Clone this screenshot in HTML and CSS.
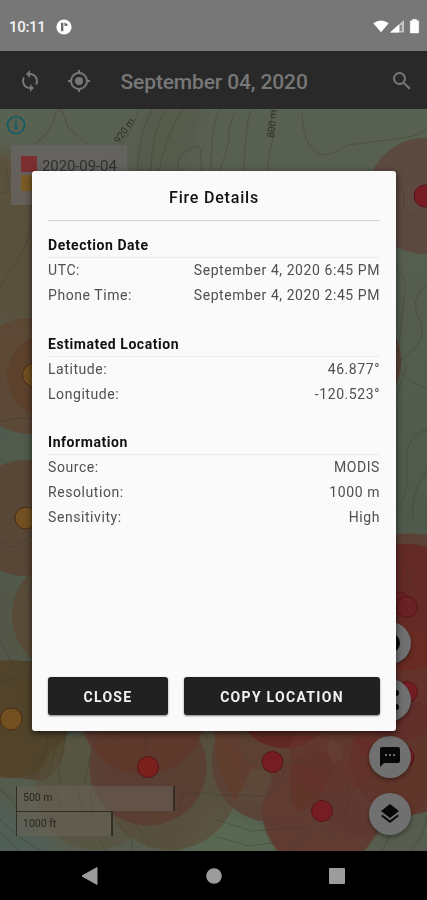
FILE: index.html
```html
<!DOCTYPE html>
<html lang="en">
<head>
<meta charset="utf-8">
<meta name="viewport" content="width=device-width, initial-scale=1">
<title>Fire Details</title>
<link rel="stylesheet" href="styles.css">
</head>
<body>
<div class="phone">
  <header class="status">
    <span class="clock">10:11</span>
    <svg class="notice" viewBox="0 0 16 16"><circle cx="8" cy="8" r="7.6" fill="#fff"/><path d="M6.2 3.8v8.4" stroke="#666" stroke-width="2.3"/><path d="M8.2 4.3h1.2M9 4v3" stroke="#777" stroke-width="1.2"/><circle cx="10.3" cy="5.7" r="1.3" fill="#666"/></svg>
    <svg class="signals" viewBox="0 0 48 16"><path d="M.3 4.2Q8-1.3 15.700 4.200L8 13.200z" fill="#fff"/><path d="M17 13.600 31 1v12.600z" fill="#c4c4c4"/><path d="M17 13.600 26 5.500v8.100z" fill="#fff"/><path d="M28 6v6" stroke="#777" stroke-width="1.500"/><path d="M39.500.300h4v1.500h2.200v12.200h-8.400V1.800h2.200z" fill="#fff" stroke="#fff" stroke-width=".5" stroke-linejoin="round"/></svg>
  </header>
  <nav class="appbar">
    <svg class="bar-icon sync" viewBox="0 0 24 24"><path d="M12 4V1L8 5l4 4V6c3.310 0 6 2.690 6 6 0 1.010-.25 1.970-.7 2.800l1.460 1.460C19.540 15.030 20 13.570 20 12c0-4.420-3.580-8-8-8zm0 14c-3.310 0-6-2.690-6-6 0-1.010.25-1.970.7-2.800L5.240 7.740C4.460 8.970 4 10.430 4 12c0 4.420 3.580 8 8 8v3l4-4-4-4v3z"/></svg>
    <svg class="bar-icon locate" viewBox="0 0 24 24"><path d="M12 8a4 4 0 1 0 0 8 4 4 0 0 0 0-8zm8.940 3A8.994 8.994 0 0 0 13 3.060V1h-2v2.060A8.994 8.994 0 0 0 3.060 11H1v2h2.060A8.994 8.994 0 0 0 11 20.940V23h2v-2.060A8.994 8.994 0 0 0 20.940 13H23v-2h-2.060zM12 19a7 7 0 1 1 0-14 7 7 0 0 1 0 14z"/></svg>
    <h1 class="title">September 04, 2020</h1>
    <svg class="bar-icon search" viewBox="0 0 24 24"><path d="M15.500 14h-.79l-.28-.27A6.471 6.471 0 0 0 16 9.500 6.500 6.500 0 1 0 9.500 16c1.610 0 3.090-.59 4.230-1.570l.27.28v.79l5 4.990L20.490 19l-4.990-5zm-6 0a4.500 4.500 0 1 1 0-9 4.500 4.500 0 0 1 0 9z"/></svg>
  </nav>

  <main class="map">
    <svg class="terrain" viewBox="0 109 427 742">
      <defs>
        <linearGradient id="ground" x1="0" y1="0" x2="0" y2="1">
          <stop offset="0" stop-color="#596151"/><stop offset=".55" stop-color="#505a4b"/><stop offset="1" stop-color="#565d4e"/>
        </linearGradient>
        <filter id="soft"><feGaussianBlur stdDeviation="6"/></filter>
        <filter id="edge"><feGaussianBlur stdDeviation=".7"/></filter>
      </defs>
      <rect y="109" width="427" height="742" fill="url(#ground)"/>
      <g filter="url(#soft)">
        <path d="M-10 150Q30 150 50 200V325H-10z" fill="#5a513e"/>
        <path d="M-10 385L50 395V425L-10 440z" fill="#4d5a4d"/>
        <path d="M-10 568L15 590 35 660H-10z" fill="#535747"/>
        <path d="M-10 795Q25 820 65 860H-10z" fill="#505e57"/>
        <path d="M205 800L270 830 280 860H180z" fill="#586853"/>
        <path d="M145 109h60l-25 70h-50z" fill="#545c4c"/>
      </g>
      <g fill="#5b4530" filter="url(#edge)">
        <circle cx="30" cy="376" r="58" fill="#5d4632" opacity=".85"/>
        <circle cx="48" cy="376" r="41" fill="#5e412b" opacity=".8"/>
        <circle cx="25" cy="518" r="58" fill="#5a4433" opacity=".9"/>
        <circle cx="70" cy="615" r="58" opacity=".75"/>
        <circle cx="10" cy="719" r="59" fill="#554229" opacity=".9"/>
        <path d="M0 661H32V731H65Q68 769 42 781L0 775z" fill="#53422b" opacity=".8"/>
        <circle cx="95" cy="791" r="59" fill="#5a4f3c" opacity=".55"/>
        <circle cx="170" cy="782" r="68" fill="#594e3b" opacity=".75"/>
      </g>
      <g filter="url(#edge)">
        <circle cx="425" cy="196" r="58" fill="#5c4a3f"/>
        <circle cx="343" cy="361" r="58" fill="#5c4239"/>
        <path d="M390 535Q414 531 435 537V797Q412 820 382 829L356 858H282Q260 825 264 801 229 777 214 731H390z" fill="#5a4035"/>
        <circle cx="407" cy="607" r="63" fill="#652823" opacity=".88"/>
        <circle cx="401" cy="685" r="55" fill="#682924" opacity=".65"/>
        <circle cx="407" cy="758" r="57" fill="#622f29" opacity=".7"/>
        <circle cx="143" cy="713" r="62" fill="#602f27" opacity=".6"/>
        <circle cx="148" cy="767" r="58.500" fill="#5d362d" opacity=".7"/>
        <circle cx="272" cy="762" r="60" fill="#5d3e32" opacity=".8"/>
        <circle cx="284" cy="699" r="49" fill="#632720" opacity=".8"/>
        <circle cx="321" cy="811" r="59" fill="#5f382f" opacity=".7"/>
        <circle cx="334" cy="751" r="44" fill="#682f29" opacity=".5"/>
        <path d="M331 738l10 8 2 12-10 6-7-14z" fill="#674338" opacity=".5"/>
        <path d="M354 738q22 1 20 20l-12-2z" fill="#682d27" opacity=".4"/>
        <path d="M290 765l43 7-13 25-21 16-8-12z" fill="#65302a" opacity=".55"/>
        <path d="M333 771l33 30 4 37q-33-2-56-33z" fill="#603b31" opacity=".6"/>
        <path d="M214 731h27q-7 25 16 38l-21 32q-20-20-22-70z" fill="#623e2b" opacity=".65"/>
        <path d="M251 768l20 4 1 10-9 21-27-2z" fill="#5d4a3c" opacity=".7"/>
      </g>
      <g class="contours">
        <path d="M61 109Q53 113 54 120L45 136 26 151M61 109Q66 119 68 127L87 144M139 109Q132 131 119 149M152 109Q139 134 137 171M166 109Q151 134 151 171M183 109Q164 139 159 171M220 109Q211 122 211 171M235 113Q227 127 229 142L220 171M251 109Q245 127 244 171M274 109Q269 124 273 137 269 151 267 171M302 113Q303 144 316 152 324 160 348 145L396 139Q421 137 427 127"/>
        <path d="M179 171q-5-13 8-21 14-8 14 3v18M110 171v-7q3-12 13-13l7 8M0 193q11 1 9-9l-3-18M32 226Q24 255 6 277L0 288M0 422q18-6 34-3M0 540l12 8 21-12M0 640l14 27L32 660M0 680q13 3 32-9"/>
        <path d="M396 185Q407 190 404 201T418 218M396 270q15 12 8 28l-6 55 9 12q-4 15-11 31M427 285Q409 298 419 319T407 355 427 389M427 430q-23 5-20 36t-11 44M427 470q-18 25-14 50"/>
        <path d="M33 770l14-22 1-17M60 731l-13 48M68 731q-12 35-8 53M96 731l-12 54M144 731q3 10 2 20M154 767q12 21 26 26h34M202 731l12 16M105 851l-5-12M116 821l15 18 2 12M129 814l20 30"/>
        <path d="M0 790q13 9 17 19M0 819q21 22 42 32M0 832l19 19M178 809l8-19M214 795h34q28 7 36-25l8-8 28 3q33 10 29 35l-8 24M214 819l38 12 58-4M214 836l35 10 30-4M291 851l26-33 14 18M382 851l12-24M410 851q14-13 17-35"/>
        <path d="M53 786l8 21M77 786l7 30M91 782v34M402 552l9 35M427 795q-8 1-5 18"/>
      </g>
      <g class="map-label"><text transform="translate(119 144) rotate(-55)">920 m</text><text transform="translate(274 138) rotate(-84)">800 m</text></g>
      <g class="fires">
        <circle class="amber" cx="34" cy="375" r="11.500"/><circle class="amber" cx="26" cy="518" r="11"/><circle class="amber" cx="11" cy="719" r="11"/>
        <circle cx="425" cy="196" r="11"/><circle class="dim" cx="399" cy="603" r="11"/><circle class="dim" cx="407" cy="607" r="10.500"/>
        <circle cx="407" cy="692" r="10.500"/><circle cx="403" cy="757" r="11"/>
        <circle class="bright" cx="148" cy="767" r="10.500"/><circle cx="272.500" cy="762" r="10.500"/><circle cx="322" cy="811" r="10.500"/>
      </g>
    </svg>
    <svg class="info" viewBox="0 0 20 20"><circle cx="10" cy="10" r="8.500" fill="none" stroke="#10596a" stroke-width="1.700"/><path d="M10 8.200v6" fill="none" stroke="#10596a" stroke-width="1.700"/><path d="M8.600 8.700H10M8.500 13.800h3" stroke="#10596a" stroke-width=".9"/><circle cx="10" cy="5.700" r="1.100" fill="#10596a"/></svg>
    <div class="legend">
      <div class="legend-row"><i class="swatch red"></i><span>2020-09-04</span></div>
      <div class="legend-row"><i class="swatch gold"></i><span>2020-09-03</span></div>
    </div>
    <div class="scale"><div class="metric">500 m</div><div class="imperial">1000 ft</div></div>
    <div class="actions">
      <div class="fab"><svg viewBox="0 0 24 24"><circle cx="12" cy="12" r="10"/></svg></div>
      <div class="fab"><svg viewBox="0 0 24 24"><circle cx="18" cy="5" r="3"/><circle cx="18" cy="19" r="3"/><circle cx="6" cy="12" r="3"/><path d="M18 5 6 12l12 7" fill="none" stroke="#080808" stroke-width="2"/></svg></div>
      <div class="fab"><svg viewBox="0 0 24 24"><path fill-rule="evenodd" d="M20 2H4a2 2 0 0 0-2 2v18l4-4h14a2 2 0 0 0 2-2V4a2 2 0 0 0-2-2zM9 11H7V9h2zm4 0h-2V9h2zm4 0h-2V9h2z"/></svg></div>
      <div class="fab"><svg viewBox="0 0 24 24"><path d="m11.990 18.540-7.370-5.730L3 14.070l9 7 9-7-1.630-1.270zM12 16l7.360-5.730L21 9l-9-7-9 7 1.630 1.270z"/></svg></div>
    </div>
  </main>

  <footer class="navbar">
    <svg viewBox="0 0 18 20"><path d="M1 10 16 1.500v17z" fill="#9c9c9c" stroke="#9c9c9c" stroke-linejoin="round"/></svg>
    <svg viewBox="0 0 18 20"><circle cx="9" cy="10" r="7.800" fill="#9c9c9c"/></svg>
    <svg viewBox="0 0 18 20"><rect x="1" y="2" width="16" height="16" rx="1" fill="#9c9c9c"/></svg>
  </footer>

  <section class="dialog">
    <h2 class="heading">Fire Details</h2>
    <div class="group">
      <h3>Detection Date</h3>
      <div class="row"><span>UTC:</span><span>September 4, 2020 6:45 PM</span></div>
      <div class="row"><span>Phone Time:</span><span>September 4, 2020 2:45 PM</span></div>
    </div>
    <div class="group">
      <h3>Estimated Location</h3>
      <div class="row"><span>Latitude:</span><span>46.877°</span></div>
      <div class="row"><span>Longitude:</span><span>-120.523°</span></div>
    </div>
    <div class="group">
      <h3>Information</h3>
      <div class="row"><span>Source:</span><span>MODIS</span></div>
      <div class="row"><span>Resolution:</span><span>1000 m</span></div>
      <div class="row"><span>Sensitivity:</span><span>High</span></div>
    </div>
    <div class="buttons"><button class="close">CLOSE</button><button class="copy">COPY LOCATION</button></div>
  </section>
</div>
</body>
</html>
```
FILE: styles.css
```css
* { box-sizing: border-box; }
body { margin: 0; background: #000; font-family: Roboto, "Liberation Sans", sans-serif; }
h1, h2, h3 { margin: 0; }
svg { display: block; }
.phone { position: relative; width: 427px; height: 900px; display: flex; flex-direction: column; overflow: hidden; }

.status { height: 51px; flex: none; display: flex; align-items: center; background: #777; padding: 2px 6px 0 9px; color: #f3f3f3; }
.clock { width: 47px; font-size: 15px; font-weight: 500; letter-spacing: -.3px; }
.notice { width: 16px; height: 16px; }
.signals { width: 48px; height: 16px; margin-left: auto; }

.appbar { height: 58px; flex: none; display: flex; align-items: center; background: #292929; padding: 1px 13px 0 18px; }
.bar-icon { width: 24px; height: 24px; fill: #777; flex: none; }
.locate { margin-left: 25px; }
.title { margin: 2px 0 0 29.500px; font-size: 21px; font-weight: 500; line-height: 28px; letter-spacing: -.13px; color: #777; white-space: nowrap; }
.search { margin-left: auto; }

.map { position: relative; height: 742px; flex: none; overflow: hidden; }
.terrain { width: 427px; height: 742px; }
.contours { fill: none; stroke: #393c2d; stroke-opacity: .38; stroke-width: 1; }
.map-label { font-size: 10px; fill: #2b3127; }
.fires circle { fill: #761d24; stroke: #531519; stroke-width: 1; }
.fires .amber { fill: #735022; stroke: #4a2b14; }
.fires .bright { fill: #7b201d; }
.fires .dim { fill: #6a2125; }
.info { position: absolute; left: 6px; top: 6px; width: 20px; height: 20px; }
.legend { position: absolute; left: 11px; top: 36px; width: 116px; height: 60px; padding: 9px 10px; background: rgba(105, 100, 99, .8); color: #303030; font-size: 15px; letter-spacing: -.1px; }
.legend-row { height: 19px; display: flex; align-items: center; gap: 5px; white-space: nowrap; }
.legend-row span { padding-top: 4px; }
.swatch { width: 16px; height: 16px; flex: none; }
.red { background: #7c2e30; }
.gold { background: #7b5b25; }
.scale { position: absolute; left: 16px; top: 677px; font-size: 10.5px; color: #292722; line-height: 24px; }
.metric, .imperial { padding-left: 6px; border: solid #302e26; background: rgba(105, 99, 88, .55); }
.metric { width: 159px; height: 25px; border-width: 0 2px 0 1px; }
.imperial { width: 97px; height: 25px; border-width: 1px 2px 0 1px; }
.actions { position: absolute; right: 16px; top: 513px; display: flex; flex-direction: column; gap: 15px; }
.fab { width: 42px; height: 42px; border-radius: 50%; display: grid; place-items: center; background: #707070; box-shadow: 0 2px 4px rgba(0, 0, 0, .4); }
.fab svg { width: 24px; height: 24px; fill: #080808; }

.navbar { flex: 1; display: flex; align-items: center; justify-content: space-between; background: #000; padding: 0 81px; }
.navbar svg { width: 18px; height: 20px; }

.dialog { position: absolute; left: 32px; top: 171px; width: 364px; height: 560px; padding: 0 16px 16px; border-radius: 3px; background: #fafafa; box-shadow: 0 2px 7px rgba(0, 0, 0, .65); display: flex; flex-direction: column; }
.heading { height: 50px; flex: none; border-bottom: 1px solid #d0d0d0; text-align: center; font-size: 16px; font-weight: 500; line-height: 53px; letter-spacing: .8px; color: #111; margin-bottom: 14px; }
.group { margin-bottom: 25.500px; }
.group h3 { height: 23px; border-bottom: 1px solid #ececec; font-size: 14px; font-weight: 700; line-height: 20px; letter-spacing: .55px; color: #111; }
.row { height: 25px; display: flex; justify-content: space-between; font-size: 14px; line-height: 25px; letter-spacing: .57px; color: #505050; }
.buttons { margin-top: auto; display: flex; gap: 16px; }
.buttons button { height: 38px; padding: 2px 0 0; border: 0; border-radius: 3px; background: #212121; color: #f2f2f2; font: 700 14px Roboto, sans-serif; letter-spacing: 1.3px; box-shadow: 0 1px 2px rgba(0, 0, 0, .5); }
.buttons .close { width: 120px; }
.buttons .copy { flex: 1; }
```
